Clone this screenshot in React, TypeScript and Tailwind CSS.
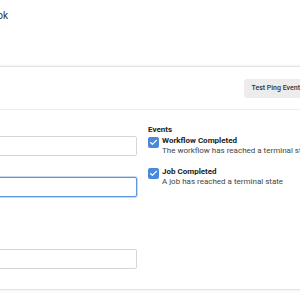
import { Check } from "lucide-react";

function EventOption({ title, desc }: { title: string; desc: string }) {
  return (
    <div className="flex items-start gap-[3px]">
      <span className="mt-[1px] flex h-[11px] w-[11px] shrink-0 items-center justify-center rounded-[2px] bg-[#4a88dc]">
        <Check className="h-[9px] w-[9px] text-white" strokeWidth={3} />
      </span>
      <div className="whitespace-nowrap">
        <div className="text-[8px] font-bold leading-[10px] text-[#222]">{title}</div>
        <div className="text-[8px] leading-[10px] text-[#444]">{desc}</div>
      </div>
    </div>
  );
}

export default function App() {
  return (
    <div className="h-[300px] w-[300px] overflow-hidden bg-white font-['Roboto',sans-serif]">
      {/* header (title cut off at the left) */}
      <div className="h-[66px] pt-[10px]">
        <div className="flex w-[8px] justify-end whitespace-nowrap text-[10px] leading-[12px] text-[#333]">
          Webhook
        </div>
      </div>

      {/* card */}
      <div className="-mx-[20px] border-y border-[#e4e4e4] bg-white shadow-[0_0_3px_rgba(0,0,0,0.1)]">
        <div className="flex h-[43px] items-center justify-end border-b border-[#ececec] pr-[12px]">
          <button className="h-[19px] rounded-[3px] bg-[#ececec] px-[8px] text-[7px] font-medium text-[#333]">
            Test Ping Event
          </button>
        </div>

        <div className="flex gap-[11px] pb-[20px]">
          <div className="flex w-[157px] shrink-0 flex-col pt-[26px]">
            <div className="h-[20px] rounded-[2px] border border-[#d6d6d6] bg-white" />
            <div className="mt-[21px] h-[20px] rounded-[2px] border border-[#5a97e0] bg-white shadow-[0_0_0_1px_rgba(90,151,224,0.35)]" />
            <div className="mt-[52px] h-[20px] rounded-[2px] border border-[#d6d6d6] bg-white" />
          </div>

          <div className="flex flex-col pt-[15px]">
            <div className="text-[8px] font-bold leading-[10px] text-[#222]">Events</div>
            <div className="mt-[1px] flex flex-col gap-[11px]">
              <EventOption title="Workflow Completed" desc="The workflow has reached a terminal state" />
              <EventOption title="Job Completed" desc="A job has reached a terminal state" />
            </div>
          </div>
        </div>
      </div>
    </div>
  );
}
